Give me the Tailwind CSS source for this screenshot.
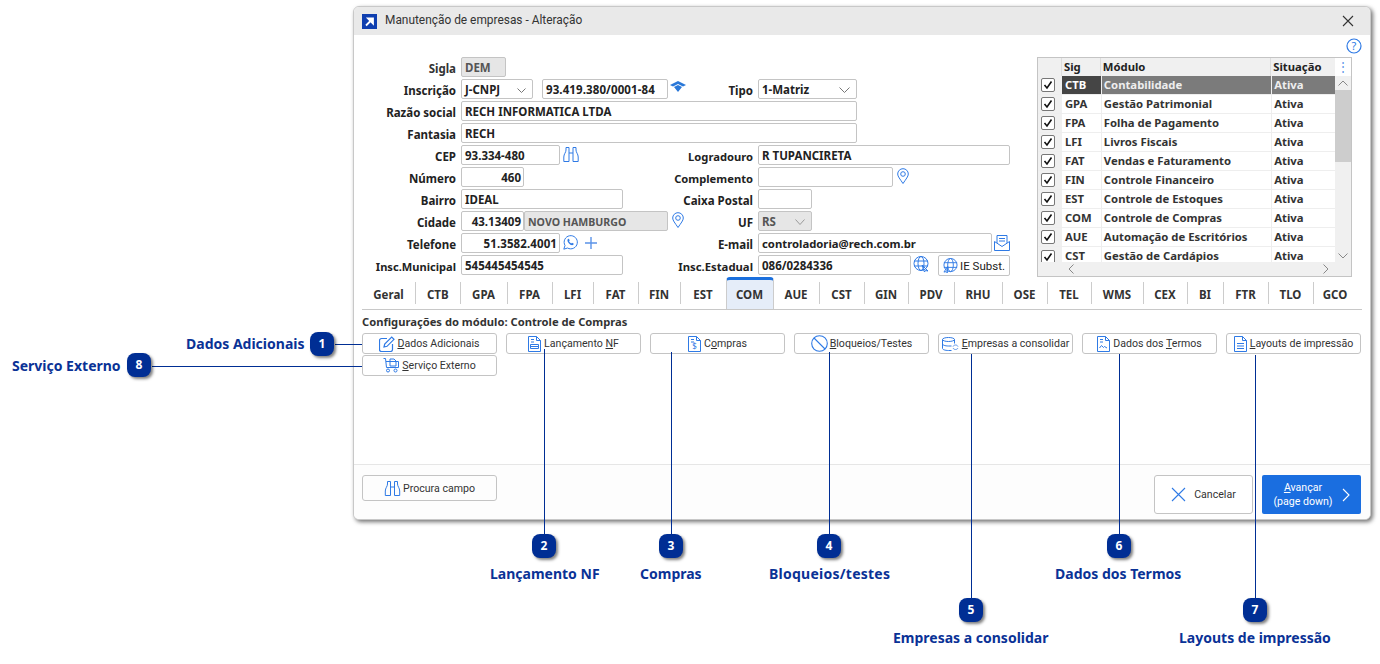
<!DOCTYPE html>
<html lang="pt-BR">
<head>
  <meta charset="UTF-8">
  <title>Manutenção de empresas</title>
  <script src="https://cdn.jsdelivr.net/npm/@tailwindcss/browser@4"></script>
</head>
<body class="bg-white [font-family:'Noto_Sans',sans-serif] text-[#222] overflow-hidden">
<div class="relative w-[1380px] h-[664px] pt-[6px] pl-[353px]">

  <!-- janela -->
  <div class="w-[1018px] h-[514px] bg-white border border-[#c8c8c8] rounded-[6px] shadow-[2px_2px_4px_rgba(0,0,0,0.55)] flex flex-col overflow-hidden">
    <div class="h-[28px] shrink-0 bg-[#e9e9e9] flex items-center pl-[8px] pr-[16px]">
      <svg class="w-[15px] h-[15px]" viewBox="0 0 15 15"><rect width="15" height="15" fill="#0f3fb0"/><path d="M4 11.5 10 5.5M6 4.5h5v5z" stroke="#fff" stroke-width="1.8" fill="#fff"/></svg>
      <span class="ml-[8px] text-[11.9px] text-[#333] [font-family:Roboto,sans-serif]">Manutenção de empresas - Alteração</span>
      <svg class="ml-auto w-[12px] h-[12px]" viewBox="0 0 12 12"><path d="M1 1l10 10M11 1 1 11" stroke="#333" stroke-width="1.1"/></svg>
    </div>

    <div class="relative flex shrink-0 pt-[22px] pl-[7px] h-[242px]">
      <svg class="absolute right-[8px] top-[3px] w-[16px] h-[16px]" viewBox="0 0 16 16"><circle cx="8" cy="8" r="7" fill="none" stroke="#2f7ae5" stroke-width="1.2"/><text x="8" y="12" font-size="11" text-anchor="middle" fill="#2f7ae5" font-family="Noto Sans">?</text></svg>

      <!-- formulario -->
      <div class="w-[676px] text-[11.5px] font-bold leading-[23px]">
        <div class="flex h-[22px]">
          <div class="w-[95px] text-right text-[#333]">Sigla</div>
          <div class="ml-[5px] w-[45px] h-[20px] bg-[#e6e6e6] border border-[#c4c4c4] rounded-[2px] pl-[3px] leading-[20px] text-[#555]">DEM</div>
        </div>
        <div class="flex h-[22px]">
          <div class="w-[95px] text-right">Inscrição</div>
          <div class="ml-[5px] w-[72px] h-[20px] border border-[#c4c4c4] rounded-[2px] pl-[3px] pt-[2px] leading-[16px] flex justify-between items-center pr-[6px]">J-CNPJ
            <svg class="w-[9px] h-[5px]" viewBox="0 0 9 5"><path d="M.5.5l4 4 4-4" fill="none" stroke="#777"/></svg>
          </div>
          <div class="ml-[9px] w-[126px] h-[20px] border border-[#c4c4c4] rounded-[2px] pl-[3px] leading-[20px] tracking-[0.1px] whitespace-nowrap">93.419.380/0001-84</div>
          <svg class="ml-[2px] mt-[2px] w-[16px] h-[11px]" viewBox="0 0 16 11"><path d="M0 4 8 0l8 4-3 1.500-5-2.500-5 2.500zM4 6l4-2 4 2-4 5z" fill="#2a78d8"/></svg>
          <div class="w-[65px] shrink-0 text-right ml-[2px]">Tipo</div>
          <div class="ml-[5px] w-[99px] h-[20px] border border-[#c4c4c4] rounded-[2px] pl-[3px] pt-[2px] leading-[16px] flex justify-between items-center pr-[6px]">1-Matriz
            <svg class="w-[11px] h-[6px]" viewBox="0 0 11 6"><path d="M.5.500l5 5 5-5" fill="none" stroke="#777"/></svg>
          </div>
        </div>
        <div class="flex h-[22px]">
          <div class="w-[95px] text-right">Razão social</div>
          <div class="ml-[5px] w-[396px] h-[20px] border border-[#c4c4c4] rounded-[2px] pl-[3px] leading-[20px]">RECH INFORMATICA LTDA</div>
        </div>
        <div class="flex h-[22px]">
          <div class="w-[95px] text-right">Fantasia</div>
          <div class="ml-[5px] w-[396px] h-[20px] border border-[#c4c4c4] rounded-[2px] pl-[3px] leading-[20px]">RECH</div>
        </div>
        <div class="flex h-[22px]">
          <div class="w-[95px] text-right">CEP</div>
          <div class="ml-[5px] w-[99px] h-[20px] border border-[#c4c4c4] rounded-[2px] pl-[3px] leading-[20px]">93.334-480</div>
          <svg class="ml-[3px] mt-[1px] w-[16px] h-[17px]" viewBox="0 0 16 17" fill="none" stroke="#2f7ae5"><path d="M3 1.500h3v14H.8v-4.500C.8 8 3 6.500 3 4zM13 1.500h-3v14h5.200v-4.500C15.200 8 13 6.500 13 4zM6 7h4"/></svg>
          <div class="w-[97px] shrink-0 text-right ml-[77px] text-[11.2px]">Logradouro</div>
          <div class="ml-[5px] w-[252px] h-[20px] border border-[#c4c4c4] rounded-[2px] pl-[3px] leading-[20px]">R TUPANCIRETA</div>
        </div>
        <div class="flex h-[22px]">
          <div class="w-[95px] text-right">Número</div>
          <div class="ml-[5px] w-[63px] h-[20px] border border-[#c4c4c4] rounded-[2px] pr-[2px] text-right leading-[20px]">460</div>
          <div class="w-[229px] shrink-0 text-right text-[11.2px]">Complemento</div>
          <div class="ml-[5px] w-[135px] h-[20px] border border-[#c4c4c4] rounded-[2px]"></div>
          <svg class="ml-[4px] mt-[1px] w-[12px] h-[16px]" viewBox="0 0 12 16" fill="none" stroke="#2f7ae5"><path d="M6 15.500C3 11 .7 8.500.7 6a5.300 5.300 0 0 1 10.600 0c0 2.500-2.300 5-5.300 9.500z"/><circle cx="6" cy="6" r="2.300"/></svg>
        </div>
        <div class="flex h-[22px]">
          <div class="w-[95px] text-right">Bairro</div>
          <div class="ml-[5px] w-[162px] h-[20px] border border-[#c4c4c4] rounded-[2px] pl-[3px] leading-[20px]">IDEAL</div>
          <div class="w-[130px] shrink-0 text-right">Caixa Postal</div>
          <div class="ml-[5px] w-[54px] h-[20px] border border-[#c4c4c4] rounded-[2px]"></div>
        </div>
        <div class="flex h-[22px]">
          <div class="w-[95px] text-right">Cidade</div>
          <div class="ml-[5px] w-[63px] h-[20px] border border-[#c4c4c4] rounded-[2px] pr-[2px] text-right leading-[20px]">43.13409</div>
          <div class="w-[144px] h-[20px] bg-[#e6e6e6] border border-[#c4c4c4] rounded-[2px] pl-[3px] leading-[20px] text-[10.6px] text-[#555]">NOVO HAMBURGO</div>
          <svg class="ml-[4px] mt-[1px] w-[12px] h-[16px]" viewBox="0 0 12 16" fill="none" stroke="#2f7ae5"><path d="M6 15.500C3 11 .7 8.500.7 6a5.300 5.300 0 0 1 10.600 0c0 2.500-2.300 5-5.300 9.500z"/><circle cx="6" cy="6" r="2.300"/></svg>
          <div class="w-[69px] shrink-0 text-right">UF</div>
          <div class="ml-[5px] w-[54px] h-[20px] bg-[#e6e6e6] border border-[#c4c4c4] rounded-[2px] pl-[3px] pt-[2px] leading-[16px] text-[#555] flex justify-between items-center pr-[6px]">RS
            <svg class="w-[10px] h-[6px]" viewBox="0 0 10 6"><path d="M.5.500l4.500 5 4.500-5" fill="none" stroke="#999"/></svg>
          </div>
        </div>
        <div class="flex h-[22px]">
          <div class="w-[95px] text-right">Telefone</div>
          <div class="ml-[5px] w-[99px] h-[20px] border border-[#c4c4c4] rounded-[2px] pr-[2px] text-right leading-[20px] tracking-[0.1px]">51.3582.4001</div>
          <svg class="ml-[3px] mt-[2px] w-[15px] h-[15px]" viewBox="0 0 15 15" fill="none" stroke="#2f7ae5"><path d="M.8 14.200 2 10.500A6.600 6.600 0 1 1 4.500 13z"/><path d="M5 4c-1 1-.7 2.500.8 4.200S9 10.700 10.300 9.800l.5-1-1.800-1-.8.700C7.300 8 6.500 7.200 6 6.200l.7-.8-.8-1.700z" fill="#2f7ae5" stroke="none"/></svg>
          <svg class="ml-[6px] mt-[3px] w-[14px] h-[14px]" viewBox="0 0 14 14"><path d="M7 1v12M1 7h12" stroke="#5b93e8" stroke-width="1.400"/></svg>
          <div class="w-[155px] shrink-0 text-right">E-mail</div>
          <div class="ml-[5px] w-[234px] h-[20px] border border-[#c4c4c4] rounded-[2px] pl-[3px] leading-[20px] text-[11.3px] font-bold">controladoria@rech.com.br</div>
          <svg class="ml-[2px] mt-[1px] w-[16px] h-[17px]" viewBox="0 0 16 17" fill="none" stroke="#2f7ae5"><path d="M.5 7.500v9h15v-9l-7.500 5zM3 9V1.500h10V9M5 4.500h6M5 7h6"/></svg>
        </div>
        <div class="flex h-[22px]">
          <div class="w-[95px] text-right text-[11.1px]">Insc.Municipal</div>
          <div class="ml-[5px] w-[162px] h-[20px] border border-[#c4c4c4] rounded-[2px] pl-[3px] leading-[20px]">545445454545</div>
          <div class="w-[130px] shrink-0 text-right text-[11.3px]">Insc.Estadual</div>
          <div class="ml-[5px] w-[153px] h-[20px] border border-[#c4c4c4] rounded-[2px] pl-[3px] leading-[20px]">086/0284336</div>
          <svg class="ml-[2px] mt-[1px] w-[16px] h-[16px]" viewBox="0 0 16 16" fill="none" stroke="#2f7ae5"><circle cx="8" cy="7.500" r="7"/><ellipse cx="8" cy="7.500" rx="3" ry="7"/><path d="M1 5h14M1 10h14M9 9l6 6-2.500-.500-1 1.500z"/></svg>
          <div class="ml-[9px] w-[72px] h-[21px] shrink-0 border border-[#c4c4c4] rounded-[2px] flex items-center justify-center gap-[2px] font-normal text-[11.5px] leading-[16px] [font-family:Roboto,sans-serif]">
            <svg class="w-[15px] h-[15px]" viewBox="0 0 16 16" fill="none" stroke="#2f7ae5"><circle cx="8" cy="7.500" r="7"/><ellipse cx="8" cy="7.500" rx="3" ry="7"/><path d="M1 5h14M1 10h14M5 9l-4 6 2.500-.500 1 1.500z"/></svg>
            <span class="whitespace-nowrap">IE Subst.</span>
          </div>
        </div>
      </div>

      <!-- grade de modulos -->
      <div class="absolute left-[683px] top-[22px] w-[315px] h-[220px] border border-[#c4c4c4] flex flex-col text-[11.3px] font-bold text-[#333] leading-[18px] bg-white">
        <div class="flex flex-1 min-h-0">
          <div class="w-[298px] overflow-hidden">
            <div class="flex h-[18px] bg-[#f0f0f0] text-[#222]">
              <div class="w-[24px] border-r border-[#ddd]"></div>
              <div class="w-[39px] pl-[2px] border-r border-[#ddd]">Sig</div>
              <div class="w-[171px] pl-[2px] border-r border-[#ddd]">Módulo</div>
              <div class="w-[64px] pl-[2px]">Situação</div>
            </div>
            <div class="flex h-[19px] border-b border-[#eee]">
              <div class="w-[24px] bg-[#f0f0f0] flex items-center pl-[3px]"><span class="w-[14px] h-[14px] border border-[#777] rounded-[2px] bg-white flex items-center justify-center"><svg class="w-[10px] h-[10px]" viewBox="0 0 10 10"><path d="M1.500 5l2.500 3L8.500 1.500" fill="none" stroke="#111" stroke-width="1.600"/></svg></span></div>
              <div class="w-[39px] pl-[3px] bg-[#454545] text-white">CTB</div>
              <div class="w-[171px] pl-[2px] bg-[#7b7b7b] text-[#eee] border-l border-[#eee]">Contabilidade</div>
              <div class="w-[64px] pl-[2px] bg-[#7b7b7b] text-[#eee] border-l border-[#eee]">Ativa</div>
            </div>
            <div class="flex h-[19px] border-b border-[#eee]">
              <div class="w-[24px] bg-[#f0f0f0] flex items-center pl-[3px]"><span class="w-[14px] h-[14px] border border-[#777] rounded-[2px] bg-white flex items-center justify-center"><svg class="w-[10px] h-[10px]" viewBox="0 0 10 10"><path d="M1.500 5l2.500 3L8.500 1.500" fill="none" stroke="#111" stroke-width="1.600"/></svg></span></div>
              <div class="w-[39px] pl-[3px]">GPA</div>
              <div class="w-[171px] pl-[2px] border-l border-[#eee]">Gestão Patrimonial</div>
              <div class="w-[64px] pl-[2px] border-l border-[#eee]">Ativa</div>
            </div>
            <div class="flex h-[19px] border-b border-[#eee]">
              <div class="w-[24px] bg-[#f0f0f0] flex items-center pl-[3px]"><span class="w-[14px] h-[14px] border border-[#777] rounded-[2px] bg-white flex items-center justify-center"><svg class="w-[10px] h-[10px]" viewBox="0 0 10 10"><path d="M1.500 5l2.500 3L8.500 1.500" fill="none" stroke="#111" stroke-width="1.600"/></svg></span></div>
              <div class="w-[39px] pl-[3px]">FPA</div>
              <div class="w-[171px] pl-[2px] border-l border-[#eee]">Folha de Pagamento</div>
              <div class="w-[64px] pl-[2px] border-l border-[#eee]">Ativa</div>
            </div>
            <div class="flex h-[19px] border-b border-[#eee]">
              <div class="w-[24px] bg-[#f0f0f0] flex items-center pl-[3px]"><span class="w-[14px] h-[14px] border border-[#777] rounded-[2px] bg-white flex items-center justify-center"><svg class="w-[10px] h-[10px]" viewBox="0 0 10 10"><path d="M1.500 5l2.500 3L8.500 1.500" fill="none" stroke="#111" stroke-width="1.600"/></svg></span></div>
              <div class="w-[39px] pl-[3px]">LFI</div>
              <div class="w-[171px] pl-[2px] border-l border-[#eee]">Livros Fiscais</div>
              <div class="w-[64px] pl-[2px] border-l border-[#eee]">Ativa</div>
            </div>
            <div class="flex h-[19px] border-b border-[#eee]">
              <div class="w-[24px] bg-[#f0f0f0] flex items-center pl-[3px]"><span class="w-[14px] h-[14px] border border-[#777] rounded-[2px] bg-white flex items-center justify-center"><svg class="w-[10px] h-[10px]" viewBox="0 0 10 10"><path d="M1.500 5l2.500 3L8.500 1.500" fill="none" stroke="#111" stroke-width="1.600"/></svg></span></div>
              <div class="w-[39px] pl-[3px]">FAT</div>
              <div class="w-[171px] pl-[2px] border-l border-[#eee]">Vendas e Faturamento</div>
              <div class="w-[64px] pl-[2px] border-l border-[#eee]">Ativa</div>
            </div>
            <div class="flex h-[19px] border-b border-[#eee]">
              <div class="w-[24px] bg-[#f0f0f0] flex items-center pl-[3px]"><span class="w-[14px] h-[14px] border border-[#777] rounded-[2px] bg-white flex items-center justify-center"><svg class="w-[10px] h-[10px]" viewBox="0 0 10 10"><path d="M1.500 5l2.500 3L8.500 1.500" fill="none" stroke="#111" stroke-width="1.600"/></svg></span></div>
              <div class="w-[39px] pl-[3px]">FIN</div>
              <div class="w-[171px] pl-[2px] border-l border-[#eee]">Controle Financeiro</div>
              <div class="w-[64px] pl-[2px] border-l border-[#eee]">Ativa</div>
            </div>
            <div class="flex h-[19px] border-b border-[#eee]">
              <div class="w-[24px] bg-[#f0f0f0] flex items-center pl-[3px]"><span class="w-[14px] h-[14px] border border-[#777] rounded-[2px] bg-white flex items-center justify-center"><svg class="w-[10px] h-[10px]" viewBox="0 0 10 10"><path d="M1.500 5l2.500 3L8.500 1.500" fill="none" stroke="#111" stroke-width="1.600"/></svg></span></div>
              <div class="w-[39px] pl-[3px]">EST</div>
              <div class="w-[171px] pl-[2px] border-l border-[#eee]">Controle de Estoques</div>
              <div class="w-[64px] pl-[2px] border-l border-[#eee]">Ativa</div>
            </div>
            <div class="flex h-[19px] border-b border-[#eee]">
              <div class="w-[24px] bg-[#f0f0f0] flex items-center pl-[3px]"><span class="w-[14px] h-[14px] border border-[#777] rounded-[2px] bg-white flex items-center justify-center"><svg class="w-[10px] h-[10px]" viewBox="0 0 10 10"><path d="M1.500 5l2.500 3L8.500 1.500" fill="none" stroke="#111" stroke-width="1.600"/></svg></span></div>
              <div class="w-[39px] pl-[3px]">COM</div>
              <div class="w-[171px] pl-[2px] border-l border-[#eee]">Controle de Compras</div>
              <div class="w-[64px] pl-[2px] border-l border-[#eee]">Ativa</div>
            </div>
            <div class="flex h-[19px] border-b border-[#eee]">
              <div class="w-[24px] bg-[#f0f0f0] flex items-center pl-[3px]"><span class="w-[14px] h-[14px] border border-[#777] rounded-[2px] bg-white flex items-center justify-center"><svg class="w-[10px] h-[10px]" viewBox="0 0 10 10"><path d="M1.500 5l2.500 3L8.500 1.500" fill="none" stroke="#111" stroke-width="1.600"/></svg></span></div>
              <div class="w-[39px] pl-[3px]">AUE</div>
              <div class="w-[171px] pl-[2px] border-l border-[#eee]">Automação de Escritórios</div>
              <div class="w-[64px] pl-[2px] border-l border-[#eee]">Ativa</div>
            </div>
            <div class="flex h-[19px]">
              <div class="w-[24px] bg-[#f0f0f0] flex items-center pl-[3px]"><span class="w-[14px] h-[14px] border border-[#777] rounded-[2px] bg-white flex items-center justify-center"><svg class="w-[10px] h-[10px]" viewBox="0 0 10 10"><path d="M1.500 5l2.500 3L8.500 1.500" fill="none" stroke="#111" stroke-width="1.600"/></svg></span></div>
              <div class="w-[39px] pl-[3px]">CST</div>
              <div class="w-[171px] pl-[2px] border-l border-[#eee]">Gestão de Cardápios</div>
              <div class="w-[64px] pl-[2px] border-l border-[#eee]">Ativa</div>
            </div>
          </div>
          <div class="w-[16px] bg-[#f0f0f0] flex flex-col items-center">
            <div class="h-[18px] w-full bg-white flex items-center justify-center text-[#5b93e8] text-[12px] font-normal">⋮</div>
            <svg class="mt-[4px] w-[10px] h-[6px]" viewBox="0 0 10 6"><path d="M.5 5.500 5 1l4.500 4.500" fill="none" stroke="#888"/></svg>
            <div class="mt-[4px] w-full h-[72px] bg-[#cdcdcd]"></div>
            <svg class="mt-auto mb-[3px] w-[10px] h-[6px]" viewBox="0 0 10 6"><path d="M.5.500 5 5l4.500-4.500" fill="none" stroke="#888"/></svg>
          </div>
        </div>
        <div class="h-[14px] shrink-0 bg-[#f0f0f0] flex items-center pl-[30px] pr-[22px] justify-between">
          <svg class="w-[6px] h-[10px]" viewBox="0 0 6 10"><path d="M5.500.5 1 5l4.500 4.500" fill="none" stroke="#888"/></svg>
          <svg class="w-[6px] h-[10px]" viewBox="0 0 6 10"><path d="M.5.500 5 5 .5 9.500" fill="none" stroke="#888"/></svg>
        </div>
      </div>
    </div>

    <!-- abas -->
    <div class="shrink-0 mx-[8px] h-[33px] border-b border-[#c8c8c8] flex items-end text-[11.5px] font-bold text-[#333]">
      <div class="w-[54px] h-[22px] mb-[5px] pt-[4px] border-r border-[#ccc] flex items-center justify-center">Geral</div>
      <div class="w-[44.500px] h-[22px] mb-[5px] pt-[4px] border-r border-[#ccc] flex items-center justify-center">CTB</div>
      <div class="w-[47px] h-[22px] mb-[5px] pt-[4px] border-r border-[#ccc] flex items-center justify-center">GPA</div>
      <div class="w-[45px] h-[22px] mb-[5px] pt-[4px] border-r border-[#ccc] flex items-center justify-center">FPA</div>
      <div class="w-[41px] h-[22px] mb-[5px] pt-[4px] border-r border-[#ccc] flex items-center justify-center">LFI</div>
      <div class="w-[45px] h-[22px] mb-[5px] pt-[4px] border-r border-[#ccc] flex items-center justify-center">FAT</div>
      <div class="w-[42px] h-[22px] mb-[5px] pt-[4px] border-r border-[#ccc] flex items-center justify-center">FIN</div>
      <div class="w-[45px] h-[22px] mb-[5px] pt-[4px] flex items-center justify-center">EST</div>
      <div class="w-[48px] h-[32px] bg-[#e5edf9] border-t-[3px] border-[#1a6fdd] rounded-t-[4px] border-x border-x-[#ccc] flex items-center justify-center">COM</div>
      <div class="w-[46px] h-[22px] mb-[5px] pt-[4px] border-r border-[#ccc] flex items-center justify-center">AUE</div>
      <div class="w-[45px] h-[22px] mb-[5px] pt-[4px] border-r border-[#ccc] flex items-center justify-center">CST</div>
      <div class="w-[44px] h-[22px] mb-[5px] pt-[4px] border-r border-[#ccc] flex items-center justify-center">GIN</div>
      <div class="w-[46px] h-[22px] mb-[5px] pt-[4px] border-r border-[#ccc] flex items-center justify-center">PDV</div>
      <div class="w-[48px] h-[22px] mb-[5px] pt-[4px] border-r border-[#ccc] flex items-center justify-center">RHU</div>
      <div class="w-[45px] h-[22px] mb-[5px] pt-[4px] border-r border-[#ccc] flex items-center justify-center">OSE</div>
      <div class="w-[44px] h-[22px] mb-[5px] pt-[4px] border-r border-[#ccc] flex items-center justify-center">TEL</div>
      <div class="w-[52px] h-[22px] mb-[5px] pt-[4px] border-r border-[#ccc] flex items-center justify-center">WMS</div>
      <div class="w-[44px] h-[22px] mb-[5px] pt-[4px] border-r border-[#ccc] flex items-center justify-center">CEX</div>
      <div class="w-[36px] h-[22px] mb-[5px] pt-[4px] border-r border-[#ccc] flex items-center justify-center">BI</div>
      <div class="w-[45px] h-[22px] mb-[5px] pt-[4px] border-r border-[#ccc] flex items-center justify-center">FTR</div>
      <div class="w-[45px] h-[22px] mb-[5px] pt-[4px] border-r border-[#ccc] flex items-center justify-center">TLO</div>
      <div class="w-[43px] h-[22px] mb-[5px] pt-[4px] flex items-center justify-center">GCO</div>
    </div>

    <!-- configuracoes -->
    <div class="shrink-0 h-[23px] pl-[8px] pt-[4px] text-[11.2px] font-bold text-[#333] leading-[16px]">Configurações do módulo: Controle de Compras</div>
    <div class="shrink-0 ml-[8px] grid grid-cols-[repeat(7,135px)] gap-x-[9px] gap-y-[1px] text-[10.6px] text-[#333] auto-rows-[21px] [font-family:Roboto,sans-serif] whitespace-nowrap">
      <div class="border border-[#c4c4c4] rounded-[3px] flex items-center justify-center gap-[2px]">
        <svg class="w-[16px] h-[16px]" viewBox="0 0 16 16" fill="none" stroke="#2f7ae5" stroke-width="1.200"><path d="M8 2.500H2.500a2 2 0 0 0-2 2v9a2 2 0 0 0 2 2h9a2 2 0 0 0 2-2V8"/><path d="M5 11l.7-3L12.700 1l2.300 2.300-7 7z"/></svg>
        <span class="pt-[1px]"><u>D</u>ados Adicionais</span>
      </div>
      <div class="border border-[#c4c4c4] rounded-[3px] flex items-center justify-center gap-[3px]">
        <svg class="w-[13px] h-[16px]" viewBox="0 0 13 16" fill="none" stroke="#2f7ae5"><path d="M.5.500h8l4 4v11H.5zM8.500.500v4h4M3 3.500h3M3 6h3M2.500 8.500h8v4h-8zM2.500 10.500h8"/></svg>
        <span class="pt-[1px]">Lançamento <u>N</u>F</span>
      </div>
      <div class="border border-[#c4c4c4] rounded-[3px] flex items-center justify-center gap-[3px]">
        <svg class="w-[13px] h-[16px]" viewBox="0 0 13 16" fill="none" stroke="#2f7ae5"><path d="M.5.500h8l4 4v11H.5zM8.500.500v4h4M3 3.500h3M3 6h3"/><text x="6.500" y="13" font-size="8" text-anchor="middle" fill="#2f7ae5" stroke="none" font-family="Noto Sans">$</text></svg>
        <span class="pt-[1px]">C<u>o</u>mpras</span>
      </div>
      <div class="border border-[#c4c4c4] rounded-[3px] flex items-center justify-center gap-[2px]">
        <svg class="w-[17px] h-[17px]" viewBox="0 0 17 17" fill="none" stroke="#2f7ae5" stroke-width="1.100"><circle cx="8.500" cy="8.500" r="7.800"/><path d="M3 3l11 11"/></svg>
        <span class="pt-[1px]"><u>B</u>loqueios/Testes</span>
      </div>
      <div class="border border-[#c4c4c4] rounded-[3px] flex items-center justify-center gap-[2px]">
        <svg class="w-[18px] h-[14px]" viewBox="0 0 18 14" fill="none" stroke="#2f7ae5"><ellipse cx="6.500" cy="2.500" rx="6" ry="2"/><path d="M.5 2.500v9c0 1 2.500 2 6 2h3M.5 7c0 1 2.500 2 6 2h3M12.500 2.500v4"/><path d="M11 9.500c1-2 4-2 5 0M16 11c-1 2-4 2-5 0" stroke="#5b93e8"/></svg>
        <span class="pt-[1px]"><u>E</u>mpresas a consolidar</span>
      </div>
      <div class="border border-[#c4c4c4] rounded-[3px] flex items-center justify-center gap-[3px]">
        <svg class="w-[13px] h-[16px]" viewBox="0 0 13 16" fill="none" stroke="#2f7ae5"><path d="M.5.500h8l4 4v11H.5zM8.500.500v4h4M3 3.500h3M3 6h3M2.500 12l2-2.500 2 2 1-1 2.500 1.500"/></svg>
        <span class="pt-[1px]">Dados dos <u>T</u>ermos</span>
      </div>
      <div class="border border-[#c4c4c4] rounded-[3px] flex items-center justify-center gap-[3px]">
        <svg class="w-[13px] h-[16px]" viewBox="0 0 13 16" fill="none" stroke="#2f7ae5"><path d="M.5.500h8l4 4v11H.5zM8.500.500v4h4M3 7.500h7M3 10h7M3 12.500h7"/></svg>
        <span class="pt-[1px]"><u>L</u>ayouts de impressão</span>
      </div>
      <div class="border border-[#c4c4c4] rounded-[3px] flex items-center justify-center gap-[3px]">
        <svg class="w-[16px] h-[15px]" viewBox="0 0 16 15" fill="none" stroke="#2f7ae5"><path d="M.5.500h2l1 9h12M3 3.500h12.500v6M7 1h4l2 2v5H7z"/><circle cx="5" cy="12.500" r="1.500"/><circle cx="12.500" cy="12.500" r="1.500"/></svg>
        <span class="pt-[1px]"><u>S</u>erviço Externo</span>
      </div>
    </div>

    <div class="flex-1"></div>

    <!-- rodape -->
    <div class="shrink-0 h-[55px] border-t border-[#e6e6e6] bg-[#fdfdfd] flex items-start pt-[10px] pl-[8px] pr-[9px] text-[10.6px] text-[#333] [font-family:Roboto,sans-serif]">
      <div class="w-[135px] h-[26px] border border-[#c4c4c4] rounded-[3px] flex items-center justify-center gap-[2px]">
        <svg class="w-[17px] h-[17px]" viewBox="0 0 16 17" fill="none" stroke="#2f7ae5"><path d="M3 1.500h3v14H.8v-4.500C.8 8 3 6.500 3 4zM13 1.500h-3v14h5.200v-4.500C15.200 8 13 6.500 13 4zM6 7h4"/></svg>
        <span class="pt-[1px]">Procura campo</span>
      </div>
      <div class="ml-auto w-[99px] h-[39px] border border-[#c4c4c4] rounded-[3px] flex items-center justify-center gap-[8px] bg-white">
        <svg class="w-[15px] h-[15px]" viewBox="0 0 15 15"><path d="M1 1l13 13M14 1 1 14" stroke="#2f7ae5" stroke-width="1.100"/></svg>
        <span class="pt-[1px]">Cancelar</span>
      </div>
      <div class="ml-[9px] w-[99px] h-[39px] bg-[#1a6ee0] rounded-[2px] flex items-center justify-center gap-[9px] text-white leading-[14px] text-center">
        <span><u>A</u>vançar<br>(page down)</span>
        <svg class="w-[8px] h-[14px]" viewBox="0 0 8 14"><path d="M1 1l6 6-6 6" fill="none" stroke="#fff" stroke-width="1.100"/></svg>
      </div>
    </div>
  </div>

  <!-- chamadas -->
  <div class="absolute left-[335px] top-[344px] w-[27px] h-px bg-[#002e94]"></div>
  <div class="absolute left-[152px] top-[366px] w-[210px] h-px bg-[#002e94]"></div>
  <div class="absolute left-[544px] top-[349px] w-px h-[185px] bg-[#002e94]"></div>
  <div class="absolute left-[671px] top-[352px] w-px h-[182px] bg-[#002e94]"></div>
  <div class="absolute left-[829px] top-[352px] w-px h-[182px] bg-[#002e94]"></div>
  <div class="absolute left-[971px] top-[354px] w-px h-[244px] bg-[#002e94]"></div>
  <div class="absolute left-[1119px] top-[354px] w-px h-[180px] bg-[#002e94]"></div>
  <div class="absolute left-[1255px] top-[355px] w-px h-[243px] bg-[#002e94]"></div>

  <div class="absolute left-[310px] top-[332px] w-[24px] h-[24px] rounded-[8px] bg-[#002e94] text-white text-[12px] font-bold flex items-center justify-center shadow-[2px_2px_3px_rgba(0,0,0,0.5)]">1</div>
  <div class="absolute left-[532px] top-[534px] w-[24px] h-[24px] rounded-[8px] bg-[#002e94] text-white text-[12px] font-bold flex items-center justify-center shadow-[2px_2px_3px_rgba(0,0,0,0.5)]">2</div>
  <div class="absolute left-[659px] top-[534px] w-[24px] h-[24px] rounded-[8px] bg-[#002e94] text-white text-[12px] font-bold flex items-center justify-center shadow-[2px_2px_3px_rgba(0,0,0,0.5)]">3</div>
  <div class="absolute left-[817px] top-[534px] w-[24px] h-[24px] rounded-[8px] bg-[#002e94] text-white text-[12px] font-bold flex items-center justify-center shadow-[2px_2px_3px_rgba(0,0,0,0.5)]">4</div>
  <div class="absolute left-[959px] top-[598px] w-[24px] h-[24px] rounded-[8px] bg-[#002e94] text-white text-[12px] font-bold flex items-center justify-center shadow-[2px_2px_3px_rgba(0,0,0,0.5)]">5</div>
  <div class="absolute left-[1107px] top-[534px] w-[24px] h-[24px] rounded-[8px] bg-[#002e94] text-white text-[12px] font-bold flex items-center justify-center shadow-[2px_2px_3px_rgba(0,0,0,0.5)]">6</div>
  <div class="absolute left-[1243px] top-[598px] w-[24px] h-[24px] rounded-[8px] bg-[#002e94] text-white text-[12px] font-bold flex items-center justify-center shadow-[2px_2px_3px_rgba(0,0,0,0.5)]">7</div>
  <div class="absolute left-[127px] top-[353px] w-[24px] h-[24px] rounded-[8px] bg-[#002e94] text-white text-[12px] font-bold flex items-center justify-center shadow-[2px_2px_3px_rgba(0,0,0,0.5)]">8</div>

  <div class="absolute left-[186px] top-[334px] text-[14px] font-bold text-[#0a3296] whitespace-nowrap leading-[20px]">Dados Adicionais</div>
  <div class="absolute left-[12px] top-[356px] text-[14px] font-bold text-[#0a3296] whitespace-nowrap leading-[20px]">Serviço Externo</div>
  <div class="absolute left-[490px] top-[564px] text-[14px] font-bold text-[#0a3296] whitespace-nowrap leading-[20px]">Lançamento NF</div>
  <div class="absolute left-[640px] top-[564px] text-[14px] font-bold text-[#0a3296] whitespace-nowrap leading-[20px]">Compras</div>
  <div class="absolute left-[769px] top-[564px] text-[14px] font-bold text-[#0a3296] whitespace-nowrap leading-[20px] tracking-[0.25px]">Bloqueios/testes</div>
  <div class="absolute left-[1055px] top-[564px] text-[14px] font-bold text-[#0a3296] whitespace-nowrap leading-[20px]">Dados dos Termos</div>
  <div class="absolute left-[893px] top-[628px] text-[14px] font-bold text-[#0a3296] whitespace-nowrap leading-[20px]">Empresas a consolidar</div>
  <div class="absolute left-[1179px] top-[628px] text-[14px] font-bold text-[#0a3296] whitespace-nowrap leading-[20px]">Layouts de impressão</div>
</div>
</body>
</html>
